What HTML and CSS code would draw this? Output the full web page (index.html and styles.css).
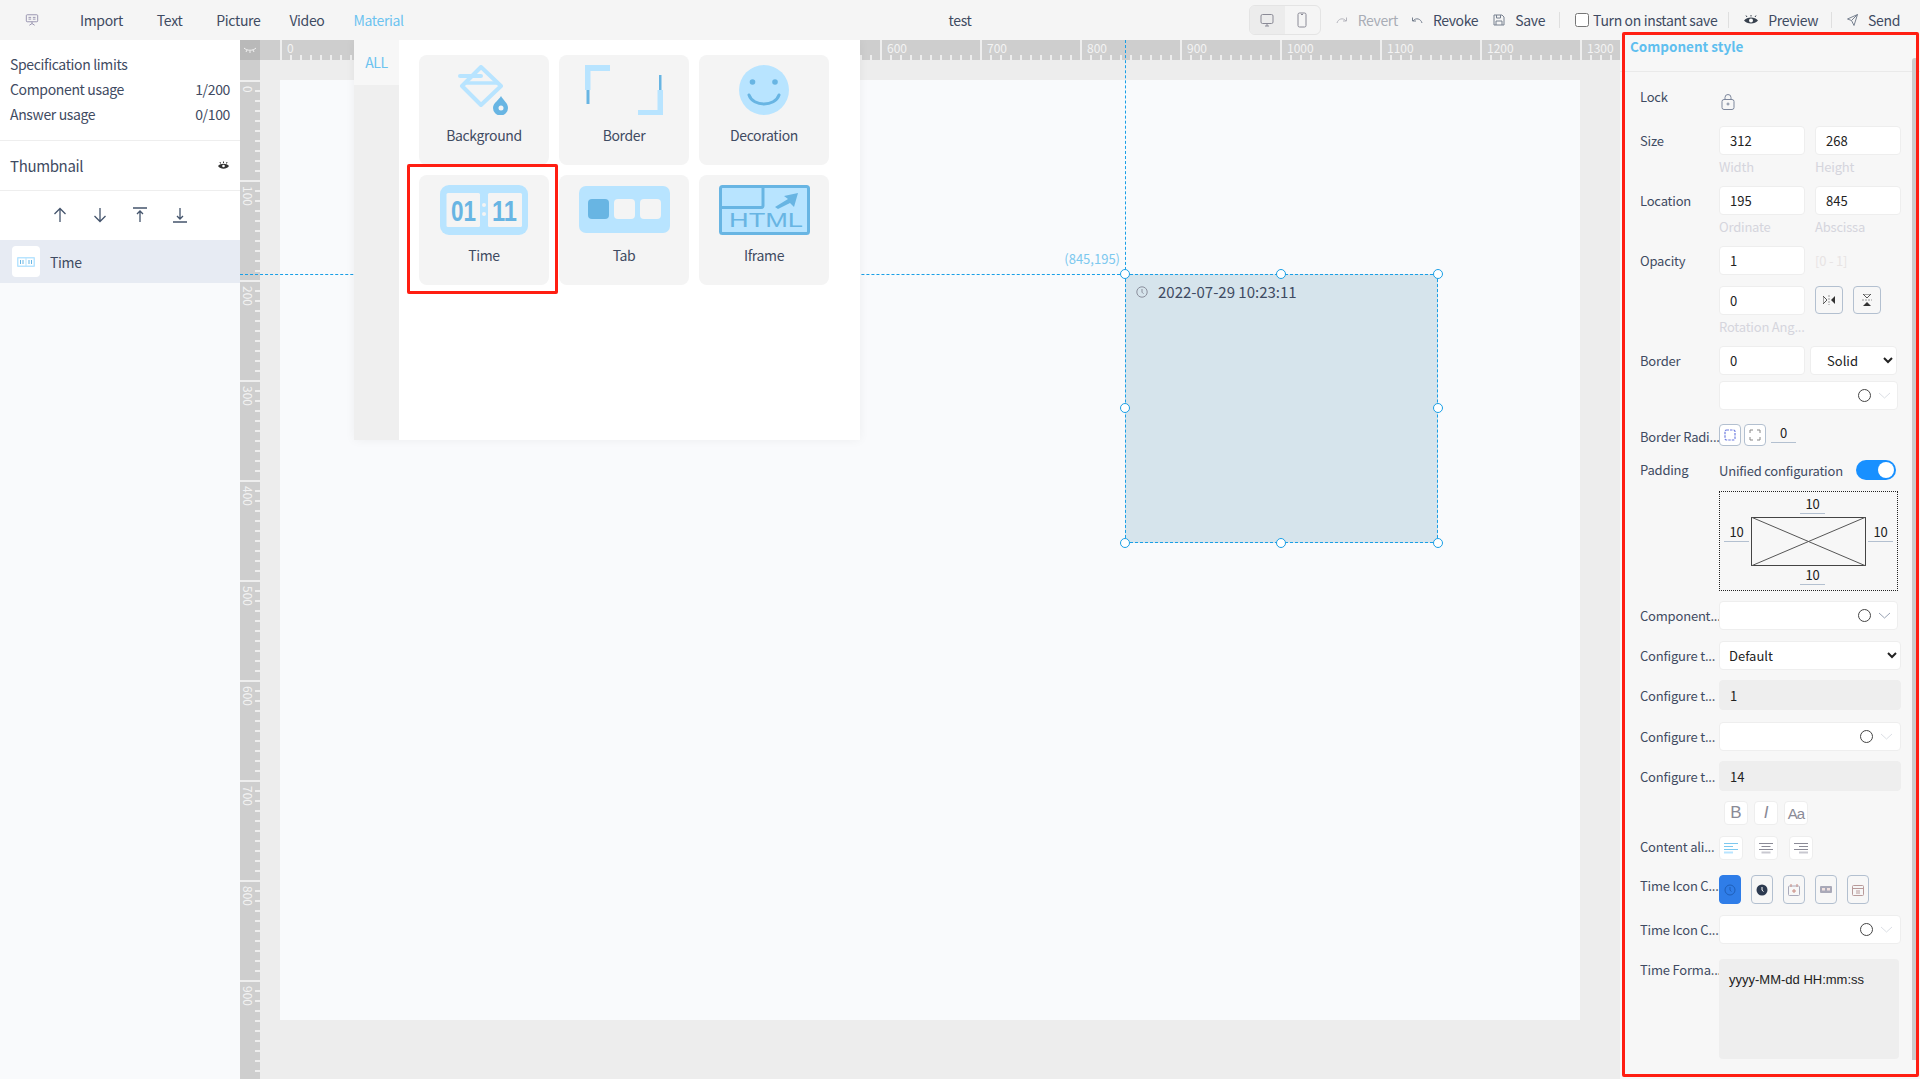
FILE: index.html
```html
<!DOCTYPE html>
<html lang="en">
<head>
  <meta charset="UTF-8" />
  <title>Screen editor</title>
  <link rel="stylesheet" href="styles.css">
</head>
<body>

  <!-- ========== TOP BAR ========== -->
  <header class="topbar">
    <nav class="topbar-left">
      <svg class="logo" width="14" height="14" viewBox="0 0 16 14" fill="none" stroke="#8f8aa8"><rect x="1.5" y="1" width="13" height="8" rx="1"/><path d="M4 4h3M4 6h3M9 4h3M9 6h3M8 9v2M5 13l3-2 3 2"/></svg>
      <a class="nav-item">Import</a>
      <a class="nav-item">Text</a>
      <a class="nav-item">Picture</a>
      <a class="nav-item">Video</a>
      <a class="nav-item active">Material</a>
    </nav>
    <div class="doc-title">test</div>
    <div class="topbar-right">
      <div class="device-toggle">
        <span class="device on"><svg width="14" height="14" viewBox="0 0 14 14" fill="none" stroke="#8a8a96"><rect x="1" y="1.5" width="12" height="9" rx="1.5"/><path d="M5 13h4M7 11v2"/></svg></span>
        <span class="device"><svg width="12" height="16" viewBox="0 0 12 16" fill="none" stroke="#8a8a96"><rect x="2" y="1" width="8" height="14" rx="1.5"/><path d="M5 2.5h2"/></svg></span>
      </div>
      <span class="tool muted"><svg width="12" height="8" viewBox="0 0 12 8" fill="none" stroke="#b5b5bd"><path d="M1 7c1-4 6-6 9-2M10.500 1.500v3.500h-3.500"/></svg>Revert</span>
      <span class="tool"><svg width="12" height="8" viewBox="0 0 12 8" fill="none" stroke="#77808f"><path d="M11 7c-1-4-6-6-9-2M1.500 1.500v3.500h3.500"/></svg>Revoke</span>
      <span class="tool"><svg width="12" height="12" viewBox="0 0 12 12" fill="none" stroke="#77808f"><path d="M1 1h8l2 2v8H1zM3.500 1v3h4V1M3 11V7h6v4"/></svg>Save</span>
      <i class="bar-divider"></i>
      <label class="instant-save"><input type="checkbox">Turn on instant save</label>
      <i class="bar-divider"></i>
      <span class="tool tool-preview"><svg width="14" height="10" viewBox="0 0 14 10"><path d="M0 5.500C3 1.500 11 1.500 14 5.500 11 9.500 3 9.500 0 5.500z" fill="#39424f"/><circle cx="7" cy="5.500" r="2" fill="#fff"/><path d="M3 2L2 .5M7 1.500V0M11 2l1-1.500" stroke="#39424f"/></svg>Preview</span>
      <i class="bar-divider"></i>
      <span class="tool"><svg width="11" height="12" viewBox="0 0 11 12" fill="none" stroke="#77808f"><path d="M10.500 .5L.5 5l4 1.500L7 11.500zM4.500 6.500l6-6"/></svg>Send</span>
    </div>
  </header>

  <div class="workspace">

    <!-- ========== LEFT SIDEBAR ========== -->
    <aside class="sidebar">
      <div class="limits">
        <div class="limit-row">Specification limits</div>
        <div class="limit-row"><span>Component usage</span><span>1/200</span></div>
        <div class="limit-row"><span>Answer usage</span><span>0/100</span></div>
      </div>
      <div class="thumb-head">
        <span>Thumbnail</span>
        <svg width="11" height="9" viewBox="0 0 11 9"><path d="M0 5C2.500 2 8.500 2 11 5 8.500 8.500 2.500 8.500 0 5z" fill="#333"/><circle cx="5.500" cy="5" r="1.300" fill="#fff"/><path d="M2.500 2.500L2 1M5.500 2V.5M8.500 2.500L9 1" stroke="#333"/></svg>
      </div>
      <div class="order-tools">
        <svg width="14" height="16" viewBox="0 0 14 16" fill="none" stroke="#44546c" stroke-width="1.300"><path d="M7 15V1.500M1.500 7L7 1.500 12.500 7"/></svg>
        <svg width="14" height="16" viewBox="0 0 14 16" fill="none" stroke="#44546c" stroke-width="1.300"><path d="M7 1v13.500M1.500 9L7 14.500 12.500 9"/></svg>
        <svg width="14" height="16" viewBox="0 0 14 16" fill="none" stroke="#44546c" stroke-width="1.300"><path d="M0 1h14M7 15V4M4 7l3-3 3 3"/></svg>
        <svg width="14" height="16" viewBox="0 0 14 16" fill="none" stroke="#44546c" stroke-width="1.300"><path d="M0 15h14M7 1v11M4 9l3 3 3-3"/></svg>
      </div>
      <div class="layer-row">
        <span class="layer-thumb"><svg width="18" height="10" viewBox="0 0 18 10"><rect width="18" height="10" rx="1" fill="#b8e4ff"/><rect x="1.500" y="1.500" width="7" height="7" fill="#fff"/><rect x="9.500" y="1.500" width="7" height="7" fill="#fff"/><path d="M3.500 3v4M6 3v4M12 3v4M14.500 3v4" stroke="#68b5e3"/></svg></span>
        <span>Time</span>
      </div>
    </aside>

    <!-- ========== STAGE ========== -->
    <main class="stage">
      <div class="ruler-corner"><svg width="12" height="6" viewBox="0 0 12 6" fill="none" stroke="#f2f2f2"><path d="M0 1c3 3 9 3 12 0M3 3L2 5M6 4v2M9 3l1 2"/></svg></div>
      <div class="ruler ruler-x">
        <span>0</span><span>100</span><span>200</span><span>300</span><span>400</span><span>500</span><span>600</span><span>700</span><span>800</span><span>900</span><span>1000</span><span>1100</span><span>1200</span><span>1300</span>
      </div>
      <div class="ruler ruler-y">
        <span><b>0</b></span><span><b>100</b></span><span><b>200</b></span><span><b>300</b></span><span><b>400</b></span><span><b>500</b></span><span><b>600</b></span><span><b>700</b></span><span><b>800</b></span><span><b>900</b></span>
      </div>
      <div class="canvas"><div class="sheet"></div></div>

      <!-- guides + selected component -->
      <i class="guide guide-x"></i>
      <i class="guide guide-y"></i>
      <span class="coords">(845,195)</span>
      <div class="selected">
        <div class="clock-text">
          <svg width="12" height="12" viewBox="0 0 12 12" fill="none" stroke="#8b8f9c"><circle cx="6" cy="6" r="5.200"/><path d="M6 3v3.200l1.500 1.500"/></svg>
          <span>2022-07-29 10:23:11</span>
        </div>
        <i class="handle h-tl"></i><i class="handle h-tc"></i><i class="handle h-tr"></i>
        <i class="handle h-ml"></i><i class="handle h-mr"></i>
        <i class="handle h-bl"></i><i class="handle h-bc"></i><i class="handle h-br"></i>
      </div>

      <!-- material popup -->
      <div class="material-pop">
        <div class="pop-tabs"><div class="pop-tab">ALL</div></div>
        <div class="pop-grid">
          <div class="card">
            <svg class="card-icon" width="52" height="50" viewBox="0 0 52 50" fill="none">
              <path d="M23 2L43 21 23 40 4 21z" stroke="#b8e4ff" stroke-width="4" stroke-linejoin="round"/>
              <path d="M6 18h34" stroke="#b8e4ff" stroke-width="3.500"/>
              <path d="M2 11h21" stroke="#b8e4ff" stroke-width="4" stroke-linecap="round"/>
              <path d="M43 31c2 4 7 7 7 12a7 7 0 0 1-15 0c0-5 6-8 8-12z" fill="#68b5e3"/>
              <circle cx="43" cy="43" r="2.500" fill="#f4f4f4"/>
            </svg>
            <span>Background</span>
          </div>
          <div class="card">
            <svg class="card-icon" width="78" height="50" viewBox="0 0 78 50">
              <path d="M0 0h25v6H5.500v19H0zM78 50H53v-5h19.500V25H78z" fill="#b8e4ff"/>
              <path d="M1.500 25h3v14h-3zM74 10h2.500v15H74z" fill="#68b5e3"/>
            </svg>
            <span>Border</span>
          </div>
          <div class="card">
            <svg class="card-icon" width="50" height="50" viewBox="0 0 50 50" fill="none">
              <circle cx="25" cy="25" r="25" fill="#b8e4ff"/>
              <circle cx="13.500" cy="17" r="2.800" fill="#68b5e3"/><circle cx="36" cy="17" r="2.800" fill="#68b5e3"/>
              <path d="M10 30c4 12 26 12 30 0" stroke="#68b5e3" stroke-width="3" stroke-linecap="round"/>
            </svg>
            <span>Decoration</span>
          </div>
          <div class="card">
            <svg class="card-icon" width="88" height="50" viewBox="0 0 88 50">
              <rect width="88" height="50" rx="9" fill="#b8e4ff"/>
              <rect x="6.500" y="8" width="33.500" height="34" rx="1.500" fill="#f4f4f4"/>
              <rect x="48" y="8" width="34" height="34" rx="1.500" fill="#f4f4f4"/>
              <circle cx="44" cy="20" r="2" fill="#f4f4f4"/><circle cx="44" cy="29" r="2" fill="#f4f4f4"/>
              <text class="flip-digits" x="11" y="36" textLength="25" lengthAdjust="spacingAndGlyphs">01</text>
              <text class="flip-digits" x="52" y="36" textLength="25" lengthAdjust="spacingAndGlyphs">11</text>
            </svg>
            <span>Time</span>
          </div>
          <div class="card">
            <svg class="card-icon" width="91" height="50" viewBox="0 0 91 50">
              <rect y="1" width="91" height="47" rx="7" fill="#b8e4ff"/>
              <rect x="9" y="14" width="21" height="20" rx="4" fill="#68b5e3"/>
              <rect x="35" y="14" width="21" height="20" rx="4" fill="#f4f4f4"/>
              <rect x="61" y="14" width="21" height="20" rx="4" fill="#f4f4f4"/>
            </svg>
            <span>Tab</span>
          </div>
          <div class="card">
            <svg class="card-icon" width="91" height="50" viewBox="0 0 91 50">
              <rect x="1.500" y="1.500" width="88" height="47" rx="2" fill="#b8e4ff" stroke="#68b5e3" stroke-width="3"/>
              <path d="M2 22.500h40a2 2 0 0 0 2-2V2" fill="none" stroke="#68b5e3" stroke-width="3"/>
              <path d="M56 22l13-8-4-3 14-3-4 14-4-4-12 6z" fill="#68b5e3"/>
              <text class="html-mark" x="10" y="42" textLength="74" lengthAdjust="spacingAndGlyphs">HTML</text>
            </svg>
            <span>Iframe</span>
          </div>
        </div>
      </div>
    </main>

    <!-- ========== COMPONENT STYLE PANEL ========== -->
    <aside class="style-panel">
      <div class="panel-title">Component style</div>
      <div class="panel-body">

        <div class="row row-lock">
          <label>Lock</label>
          <svg class="lock-icon" width="14" height="16" viewBox="0 0 14 16" fill="none" stroke="#7d879c"><rect x="1" y="5.500" width="12" height="10" rx="2"/><path d="M4 5.500V3.500a3 3 0 0 1 6 0v2"/><circle cx="7" cy="10" r="1"/></svg>
        </div>

        <div class="row">
          <label>Size</label>
          <div class="pair">
            <div class="cell"><input class="field" value="312" readonly><small>Width</small></div>
            <div class="cell"><input class="field" value="268" readonly><small>Height</small></div>
          </div>
        </div>

        <div class="row">
          <label>Location</label>
          <div class="pair">
            <div class="cell"><input class="field" value="195" readonly><small>Ordinate</small></div>
            <div class="cell"><input class="field" value="845" readonly><small>Abscissa</small></div>
          </div>
        </div>

        <div class="row">
          <label>Opacity</label>
          <div class="pair">
            <div class="cell"><input class="field" value="1" readonly></div>
            <span class="range-hint">[0 - 1]</span>
          </div>
        </div>

        <div class="row">
          <label></label>
          <div class="pair">
            <div class="cell"><input class="field" value="0" readonly><small>Rotation Ang...</small></div>
            <div class="flip-btns">
              <span class="icon-btn big"><svg width="12" height="10" viewBox="0 0 12 10"><path d="M0 1l4 4-4 4z" fill="none" stroke="#555"/><path d="M12 1L8 5l4 4z" fill="#333"/><path d="M6 0v10" stroke="#999" stroke-dasharray="2 1"/></svg></span>
              <span class="icon-btn big"><svg width="10" height="12" viewBox="0 0 10 12"><path d="M1 0l4 4 4-4z" fill="none" stroke="#555"/><path d="M1 12l4-4 4 4z" fill="#333"/><path d="M0 6h10" stroke="#999" stroke-dasharray="2 1"/></svg></span>
            </div>
          </div>
        </div>

        <div class="row tight">
          <label>Border</label>
          <div class="pair border-pair">
            <input class="field" value="0" readonly>
            <select class="field border-select"><option>Solid</option></select>
          </div>
        </div>

        <div class="row row-gap-14">
          <label></label>
          <div class="swatch short"><i class="dot"></i><svg class="chev pale" width="13" height="7" viewBox="0 0 13 7" fill="none"><path d="M1 1l5.500 5L12 1"/></svg></div>
        </div>

        <div class="row row-radius">
          <label>Border Radi...</label>
          <span class="icon-btn radius"><svg width="12" height="12" viewBox="0 0 12 12" fill="none" stroke="#6f7de0" stroke-width="1.200" stroke-dasharray="2.500 1"><rect x="1" y="1" width="10" height="10" rx="1.500"/></svg></span>
          <span class="icon-btn radius"><svg width="12" height="12" viewBox="0 0 12 12" fill="none" stroke="#888"><path d="M1 4V1h3M8 1h3v3M11 8v3H8M4 11H1V8"/></svg></span>
          <span class="under-num">0</span>
        </div>

        <div class="row row-padding">
          <label>Padding</label>
          <span class="unified">Unified configuration</span>
          <span class="switch"><i></i></span>
        </div>

        <div class="row row-gap-10">
          <label></label>
          <div class="padding-box">
            <span class="under-num pad-edge">10</span>
            <div class="pad-middle">
              <span class="under-num">10</span>
              <svg class="pad-rect" width="115" height="49" viewBox="0 0 115 49" fill="none" stroke="#555"><rect x=".5" y=".5" width="114" height="48" stroke="#444"/><path d="M0 0l115 49M115 0L0 49"/></svg>
              <span class="under-num">10</span>
            </div>
            <span class="under-num pad-edge">10</span>
          </div>
        </div>

        <div class="row">
          <label>Component...</label>
          <div class="swatch short"><i class="dot"></i><svg class="chev" width="13" height="7" viewBox="0 0 13 7" fill="none"><path d="M1 1l5.500 5L12 1"/></svg></div>
        </div>

        <div class="row row-gap-10">
          <label>Configure t...</label>
          <select class="field wide"><option>Default</option></select>
        </div>

        <div class="row">
          <label class="lower">Configure t...</label>
          <input class="field wide off tall" value="1" readonly>
        </div>

        <div class="row row-gap-10">
          <label>Configure t...</label>
          <div class="swatch"><i class="dot"></i><svg class="chev pale" width="13" height="7" viewBox="0 0 13 7" fill="none"><path d="M1 1l5.500 5L12 1"/></svg></div>
        </div>

        <div class="row row-gap-9">
          <label class="lower">Configure t...</label>
          <input class="field wide off tall" value="14" readonly>
        </div>

        <div class="row">
          <label></label>
          <div class="font-btns">
            <span class="square-btn btn-b">B</span>
            <span class="square-btn btn-i">I</span>
            <span class="square-btn btn-a">Aa</span>
          </div>
        </div>

        <div class="row row-gap-15 row-align">
          <label>Content ali...</label>
          <div class="align-btns">
            <span class="square-btn"><svg width="14" height="11" viewBox="0 0 14 11" fill="none" stroke="#7cc8ef"><path d="M0 .5h14M0 3.500h9M0 6.500h14"/><path d="M0 9.500h9" stroke="#b8e4ff" stroke-width="2"/></svg></span>
            <span class="square-btn"><svg width="14" height="11" viewBox="0 0 14 11" fill="none" stroke="#8a8a96"><path d="M0 .5h14M2.500 3.500h9M0 6.500h14"/><path d="M2.500 9.500h9" stroke="#c8c8d0" stroke-width="2"/></svg></span>
            <span class="square-btn"><svg width="14" height="11" viewBox="0 0 14 11" fill="none" stroke="#8a8a96"><path d="M0 .5h14M5 3.500h9M0 6.500h14"/><path d="M5 9.500h9" stroke="#c8c8d0" stroke-width="2"/></svg></span>
          </div>
        </div>

        <div class="row">
          <label class="top">Time Icon C...</label>
          <div class="time-icons">
            <span class="icon-btn tile on"><svg width="12" height="12" viewBox="0 0 12 12" fill="none" stroke="#1f5fb8"><circle cx="6" cy="6" r="5"/><path d="M6 3v3.200l1.500 1.300"/></svg></span>
            <span class="icon-btn tile"><svg width="12" height="12" viewBox="0 0 12 12"><circle cx="6" cy="6" r="5.500" fill="#2c3a50"/><path d="M6 3v3.200l1.500 1.300" stroke="#fff" fill="none"/></svg></span>
            <span class="icon-btn tile"><svg width="12" height="12" viewBox="0 0 12 12" fill="none" stroke="#c98a80"><rect x=".5" y="2" width="11" height="9.500" rx="1" stroke="#aab"/><path d="M3 0v3M9 0v3M6 5v4M4 7h4"/></svg></span>
            <span class="icon-btn tile"><svg width="12" height="10" viewBox="0 0 12 10"><rect y="1" width="12" height="7" rx="1" fill="#a9a9b8"/><path d="M2 3h3v2.500H2zM7 3h3v2.500H7z" fill="#f1e2e0"/></svg></span>
            <span class="icon-btn tile"><svg width="12" height="12" viewBox="0 0 12 12" fill="none" stroke="#b89a9a"><rect x=".5" y="1.500" width="11" height="10" rx="1"/><path d="M.5 4.500h11M4 7h4M4 9h4"/></svg></span>
          </div>
        </div>

        <div class="row row-gap-15">
          <label>Time Icon C...</label>
          <div class="swatch"><i class="dot"></i><svg class="chev pale" width="13" height="7" viewBox="0 0 13 7" fill="none"><path d="M1 1l5.500 5L12 1"/></svg></div>
        </div>

        <div class="row">
          <label class="top">Time Forma...</label>
          <textarea class="format-box" readonly>yyyy-MM-dd HH:mm:ss</textarea>
        </div>
      </div>
      <div class="panel-scroll"></div>
    </aside>
  </div>

  <!-- red annotation boxes drawn over the screenshot -->
  <div class="mark mark-time"></div>
  <div class="mark mark-panel"></div>

</body>
</html>
```

FILE: styles.css
```css
html, body { margin: 0; height: 100%; }
body {
  width: 1920px;
  height: 1079px;
  overflow: hidden;
  position: relative;
  font-family: "Noto Sans CJK SC", "Noto Sans", sans-serif;
  font-size: 14px;
  letter-spacing: -.35px;
  color: #3f4b62;
  background: #f9fafc;
}
i { display: block; font-style: normal; }

/* ---------- TOP BAR ---------- */
.topbar { height: 40px; display: flex; align-items: center; background: #f5f5f5; padding: 0 20px; }
.topbar-left { flex: 1 1 0; display: flex; align-items: center; }
.logo { margin: 0 41px 0 5px; }
.nav-item { margin-right: 34px; line-height: 40px; }
.nav-item:nth-of-type(n+3) { margin-right: 29px; }
.nav-item.active { color: #6cc3f0; }
.doc-title { width: 40px; text-align: center; }
.topbar-right { flex: 1 1 0; display: flex; align-items: center; justify-content: flex-end; }
.device-toggle { display: flex; width: 72px; height: 30px; border: 1px solid #e4e4e4; border-radius: 6px; box-sizing: border-box; margin-right: 15px; overflow: hidden; }
.device { flex: 1; display: flex; align-items: center; justify-content: center; }
.device.on { background: #ececec; }
.tool { display: flex; align-items: center; gap: 10px; margin-right: 15px; }
.tool:last-child { margin-right: 0; }
.tool.muted { color: #a9adb6; margin-right: 13px; }
.tool-preview { margin-right: 14px; }
.bar-divider { width: 1px; height: 16px; background: #dfdfdf; margin-right: 15px; margin-left: -1px; }
.instant-save { display: flex; align-items: center; margin-right: 12px; }
.instant-save input { width: 14px; height: 14px; margin: 0 4px 0 0; }

/* ---------- WORKSPACE ---------- */
.workspace { display: flex; height: 1039px; }

/* ---------- SIDEBAR ---------- */
.sidebar { width: 240px; flex: none; }
.limits { background: #fff; padding: 12px 10px 12px; box-sizing: border-box; border-bottom: 1px solid #eee; height: 101px; }
.limit-row { display: flex; justify-content: space-between; line-height: 25px; }
.thumb-head { height: 49px; padding: 0 11px 0 10px; background: #fff; display: flex; align-items: center; justify-content: space-between; font-size: 15px; border-bottom: 1px solid #eee; }
.order-tools { height: 49px; box-sizing: border-box; padding-bottom: 2px; background: #fff; display: flex; align-items: center; justify-content: center; gap: 26px; }
.layer-row { height: 43px; background: #e7ebf3; display: flex; align-items: center; gap: 10px; padding-left: 12px; }
.layer-thumb { width: 28px; height: 31px; background: #fff; border-radius: 4px; display: flex; align-items: center; justify-content: center; }

/* ---------- STAGE ---------- */
.stage {
  width: 1380px;
  flex: none;
  position: relative;
  overflow: hidden;
  display: grid;
  grid-template-columns: 20px 1fr;
  grid-template-rows: 20px 1fr;
  background: #ededed;
}
.ruler-corner { background: #b9b9b9; display: flex; align-items: center; justify-content: center; }
.ruler { background-color: #cecece; color: #f3f3f3; font-size: 12px; letter-spacing: 0; line-height: 1; overflow: hidden; display: flex; }
.ruler-x {
  padding-left: 20px;
  background-image: repeating-linear-gradient(90deg, #eee 0 2px, transparent 2px 10px);
  background-size: 100% 5px;
  background-position: 20px bottom;
  background-repeat: no-repeat;
}
.ruler-x span { flex: 0 0 100px; box-sizing: border-box; border-left: 2px solid #eee; padding: 2px 0 0 5px; }
.ruler-y {
  flex-direction: column;
  padding-top: 20px;
  background-image: repeating-linear-gradient(180deg, #eee 0 2px, transparent 2px 10px);
  background-size: 5px 100%;
  background-position: right 20px;
  background-repeat: no-repeat;
}
.ruler-y span { flex: 0 0 100px; box-sizing: border-box; border-top: 2px solid #eee; padding: 4px 0 0 2px; }
.ruler-y b { font-weight: 400; writing-mode: vertical-rl; display: block; }
.canvas { padding: 20px; overflow: hidden; }
.sheet { width: 1300px; height: 940px; background: #f9fafc; }

.guide { position: absolute; }
.guide-x { left: 0; top: 234px; width: 885px; border-top: 1px dashed #1a9fe6; }
.guide-y { left: 885px; top: 0; height: 235px; border-left: 1px dashed #1a9fe6; }
.coords { position: absolute; right: 500px; top: 210px; font-size: 13px; letter-spacing: 0; line-height: 18px; color: #7cc8ef; }
.selected {
  position: absolute;
  left: 885px;
  top: 234px;
  width: 313px;
  height: 269px;
  box-sizing: border-box;
  background: #d6e4ec;
  border: 1px dashed #1a9fe6;
}
.clock-text { display: flex; align-items: center; gap: 10px; padding: 7px 10px; line-height: 20px; font-size: 15px; letter-spacing: 0; }
.handle { position: absolute; width: 8px; height: 8px; background: #fff; border: 1.5px solid #1a9fe6; border-radius: 50%; }
.h-tl { left: -6px; top: -6px; }
.h-tc { left: 150px; top: -6px; }
.h-tr { right: -6px; top: -6px; }
.h-ml { left: -6px; top: 128px; }
.h-mr { right: -6px; top: 128px; }
.h-bl { left: -6px; bottom: -6px; }
.h-bc { left: 150px; bottom: -6px; }
.h-br { right: -6px; bottom: -6px; }

/* ---------- MATERIAL POPUP ---------- */
.material-pop { position: absolute; left: 114px; top: 0; width: 506px; height: 400px; display: flex; background: #fff; box-shadow: 0 0 10px rgba(0,0,0,.05); }
.pop-tabs { width: 45px; background: #efefef; flex: none; }
.pop-tab { height: 45px; line-height: 45px; text-align: center; background: #f7f7f7; color: #6cc3f0; }
.pop-grid { padding: 15px 20px; display: grid; grid-template-columns: repeat(3, 130px); grid-auto-rows: 110px; gap: 10px; align-content: start; }
.card { background: #f4f4f4; border-radius: 8px; display: flex; flex-direction: column; align-items: center; padding-top: 10px; box-sizing: border-box; }
.card-icon { flex: none; }
.card span { margin-top: 10px; line-height: 20px; }
.flip-digits { font-family: "Liberation Sans", sans-serif; font-weight: 700; font-size: 30px; letter-spacing: 0; fill: #68b5e3; }
.html-mark { font-family: "Liberation Sans", sans-serif; font-size: 20px; letter-spacing: 0; fill: #68b5e3; }

/* ---------- STYLE PANEL ---------- */
.style-panel { flex: 1; position: relative; background: #f7f7f7; }
.panel-title { height: 32px; box-sizing: border-box; padding-left: 10px; line-height: 12px; font-size: 13.500px; font-weight: 700; letter-spacing: 0; color: #5fbfef; border-bottom: 1px solid #eaeaea; }
.panel-body { padding: 15px 0 0 20px; font-size: 13px; letter-spacing: -.2px; }
.panel-scroll { position: absolute; right: 2px; top: 18px; bottom: 19px; width: 6px; background: #ccc; border-radius: 3px 3px 0 0; }
.row { display: flex; margin-bottom: 11px; }
.row.tight { margin-bottom: 6px; }
.row.row-gap-14 { margin-bottom: 14px; }
.row.row-gap-10 { margin-bottom: 10px; }
.row.row-gap-9 { margin-bottom: 9px; }
.row.row-gap-15 { margin-bottom: 15px; }
.row > label { flex: 0 0 79px; min-width: 0; line-height: 29px; white-space: nowrap; }
.row > label.lower { line-height: 31px; }
.row > label.top { line-height: 22px; }
.row-align > label { line-height: 22px; }
.row-lock { height: 24px; margin-bottom: 15px; }
.row-lock label { line-height: 20px; }
.lock-icon { margin: 7px 0 0 2px; }
.pair { display: flex; gap: 10px; }
.border-pair { gap: 5px; }
.cell { display: flex; flex-direction: column; width: 86px; }
.cell small { height: 20px; line-height: 24px; font-size: 13px; color: #d5d5dd; white-space: nowrap; }
.field {
  width: 86px;
  height: 29px;
  box-sizing: border-box;
  border: 1px solid #eee;
  border-radius: 4px;
  background: #fff;
  padding: 0 0 0 10px;
  font: inherit;
  color: #222;
  outline: none;
  display: block;
}
select.field { padding-left: 5px; }
.field.wide { width: 182px; }
.field.off { background: #eee; border-color: #eee; }
.field.tall { height: 30px; }
select.border-select { width: 87px; padding-left: 12px; }
.range-hint { color: #e8e4e4; line-height: 29px; }
.flip-btns { display: flex; gap: 10px; }
.icon-btn { display: flex; align-items: center; justify-content: center; box-sizing: border-box; border: 1px solid #b3c0d0; border-radius: 4px; }
.icon-btn.big { width: 28px; height: 28px; }
.icon-btn.radius { width: 22px; height: 22px; margin-right: 3px; background: #fff; }
.under-num { display: block; width: 25px; height: 19px; line-height: 18px; text-align: center; color: #222; border-bottom: 1px solid #b3c0d0; box-sizing: border-box; }
.row-radius { height: 22px; margin-bottom: 14px; }
.row-radius > label { line-height: 26px; }
.row-radius .under-num { margin-left: 2px; }
.row-padding { height: 20px; margin-bottom: 11px; align-items: center; }
.row-padding > label { line-height: 24px; }
.unified { width: 137px; white-space: nowrap; }
.switch { width: 40px; height: 20px; border-radius: 10px; background: #1890ff; position: relative; }
.switch i { position: absolute; right: 2px; top: 2px; width: 16px; height: 16px; border-radius: 50%; background: #fff; }
.swatch { width: 182px; height: 29px; box-sizing: border-box; background: #fff; border: 1px solid #eee; border-radius: 4px; display: flex; align-items: center; justify-content: flex-end; gap: 7px; padding-right: 7px; }
.swatch.short { width: 179px; padding-right: 6px; }
.dot { width: 11px; height: 11px; border: 1px solid #444; border-radius: 50%; }
.chev path { stroke: #98a2b3; }
.chev.pale path { stroke: #dcdfe5; }
.padding-box { width: 179px; height: 100px; box-sizing: border-box; border: 1px dotted #222; display: flex; flex-direction: column; align-items: center; padding-top: 3px; }
.pad-edge { margin-left: 8px; }
.pad-middle { display: flex; width: 169px; justify-content: space-between; margin-top: 3px; }
.pad-middle .under-num { margin-top: 6px; }
.pad-rect { display: block; }
.font-btns { display: flex; gap: 6px; padding-left: 5px; }
.align-btns { display: flex; gap: 11px; }
.square-btn { width: 24px; height: 24px; box-sizing: border-box; background: #fff; border: 1px solid #eee; border-radius: 4px; display: flex; align-items: center; justify-content: center; color: #8a8a96; font-family: "Liberation Sans", sans-serif; font-size: 17px; letter-spacing: 0; }
.btn-i { font-style: italic; }
.btn-a { font-size: 15px; letter-spacing: -1px; }
.time-icons { display: flex; gap: 10px; }
.icon-btn.tile { width: 22px; height: 29px; }
.icon-btn.tile.on { background: #2f7de8; border-color: #2f7de8; }
.format-box { width: 180px; height: 100px; box-sizing: border-box; border: none; border-radius: 4px; background: #eee; padding: 11px 10px; font-family: "Liberation Sans", sans-serif; font-size: 13px; letter-spacing: 0; line-height: 20px; color: #222; resize: none; outline: none; }

/* ---------- ANNOTATIONS ---------- */
.mark { position: absolute; border: 3px solid #ff1e12; border-radius: 2px; box-sizing: border-box; pointer-events: none; }
.mark-time { left: 407px; top: 164px; width: 151px; height: 130px; }
.mark-panel { left: 1622px; top: 32px; width: 297px; height: 1045px; }
```
